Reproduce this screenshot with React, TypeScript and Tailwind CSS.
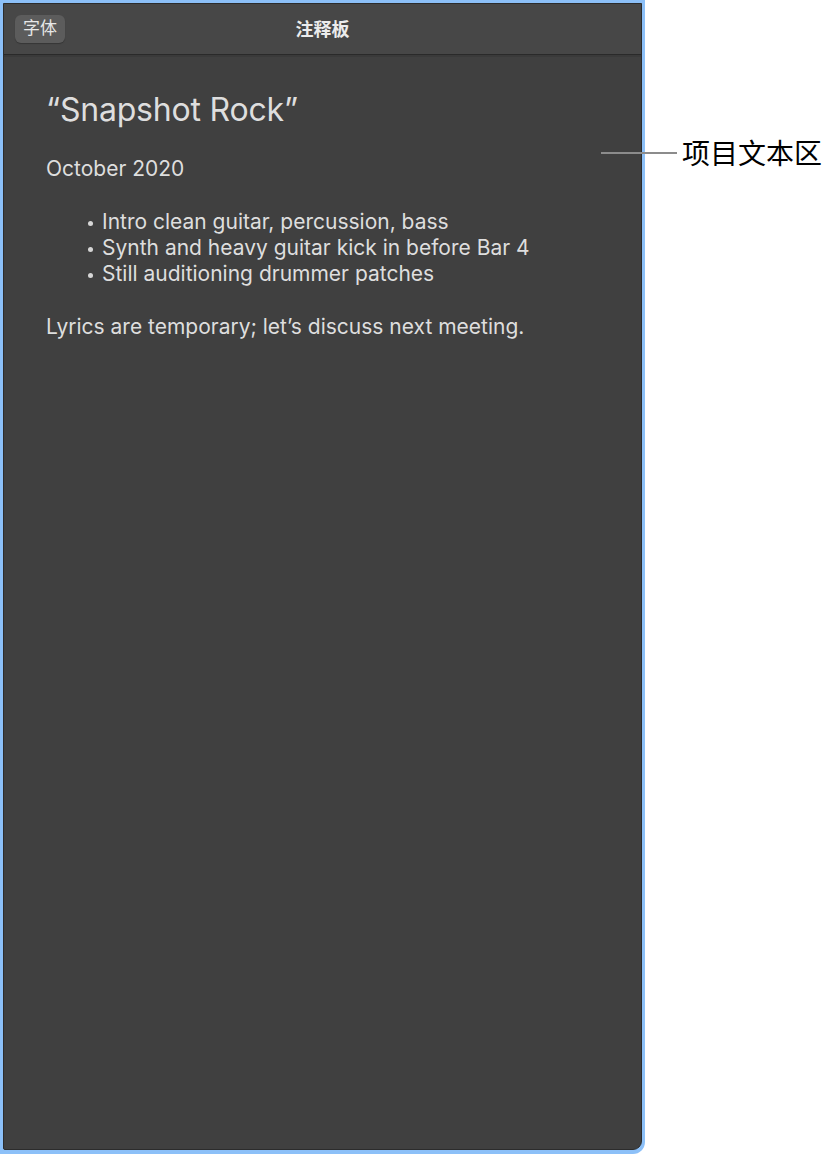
import React from "react";

function Bullet({ children }: { children: React.ReactNode }) {
  return (
    <li className="flex items-center">
      <span className="w-[15px] flex items-center pl-[1px] pt-[2px]">
        <span className="block w-[5px] h-[5px] rounded-full bg-[#d6d6d6]" />
      </span>
      <span>{children}</span>
    </li>
  );
}

export default function App() {
  const font = { fontFamily: '"Inter", "Noto Sans CJK SC", sans-serif' };
  return (
    <div className="relative w-[833px] h-[1154px] bg-white overflow-hidden" style={font}>
      <div className="w-[645px] h-[1154px] bg-[#8cc0f8] pt-[3px] pl-[3px] pr-[3px] pb-[4px] rounded-br-[12px]">
        <div className="flex flex-col h-full bg-[#404040] border border-[#2c2c2c] rounded-br-[9px] rounded-bl-[2px] overflow-hidden">
          <div className="relative flex items-center h-[50px] bg-[#474747] px-[11px] shrink-0">
            <div className="flex items-center justify-center h-[28px] w-[50px] rounded-[6px] bg-[#5c5c5c] text-[17px] text-[#e8e8e8] shadow-[0_1px_1px_rgba(0,0,0,0.25)]">
              字体
            </div>
            <div className="absolute inset-0 flex items-center justify-center text-[18px] font-bold text-[#ececec] pointer-events-none">
              注释板
            </div>
          </div>
          <div className="h-[1px] bg-[#2a2a2a] shrink-0" />
          <div className="h-[2px] bg-[#3a3a3a] shrink-0" />
          <div className="flex-1 pl-[42px] pt-[33px] text-[#dedede]">
            <div className="text-[32px] leading-[40px] tracking-[-0.2px]">“Snapshot Rock”</div>
            <div className="mt-[26px] text-[21px] leading-[26px]">October 2020</div>
            <ul className="mt-[27px] pl-[41px] text-[21px] leading-[26px]">
              <Bullet>Intro clean guitar, percussion, bass</Bullet>
              <Bullet>Synth and heavy guitar kick in before Bar 4</Bullet>
              <Bullet>Still auditioning drummer patches</Bullet>
            </ul>
            <div className="mt-[27px] text-[21px] leading-[26px]">Lyrics are temporary; let’s discuss next meeting.</div>
          </div>
        </div>
      </div>
      <div className="absolute left-[601px] top-[152px] w-[76px] h-[2px] bg-[#8c8c8c]" />
      <div className="absolute left-[682px] top-[133px] text-[28px] leading-[38px] text-black" style={{ fontFamily: '"Noto Sans CJK SC", sans-serif' }}>
        项目文本区
      </div>
    </div>
  );
}
